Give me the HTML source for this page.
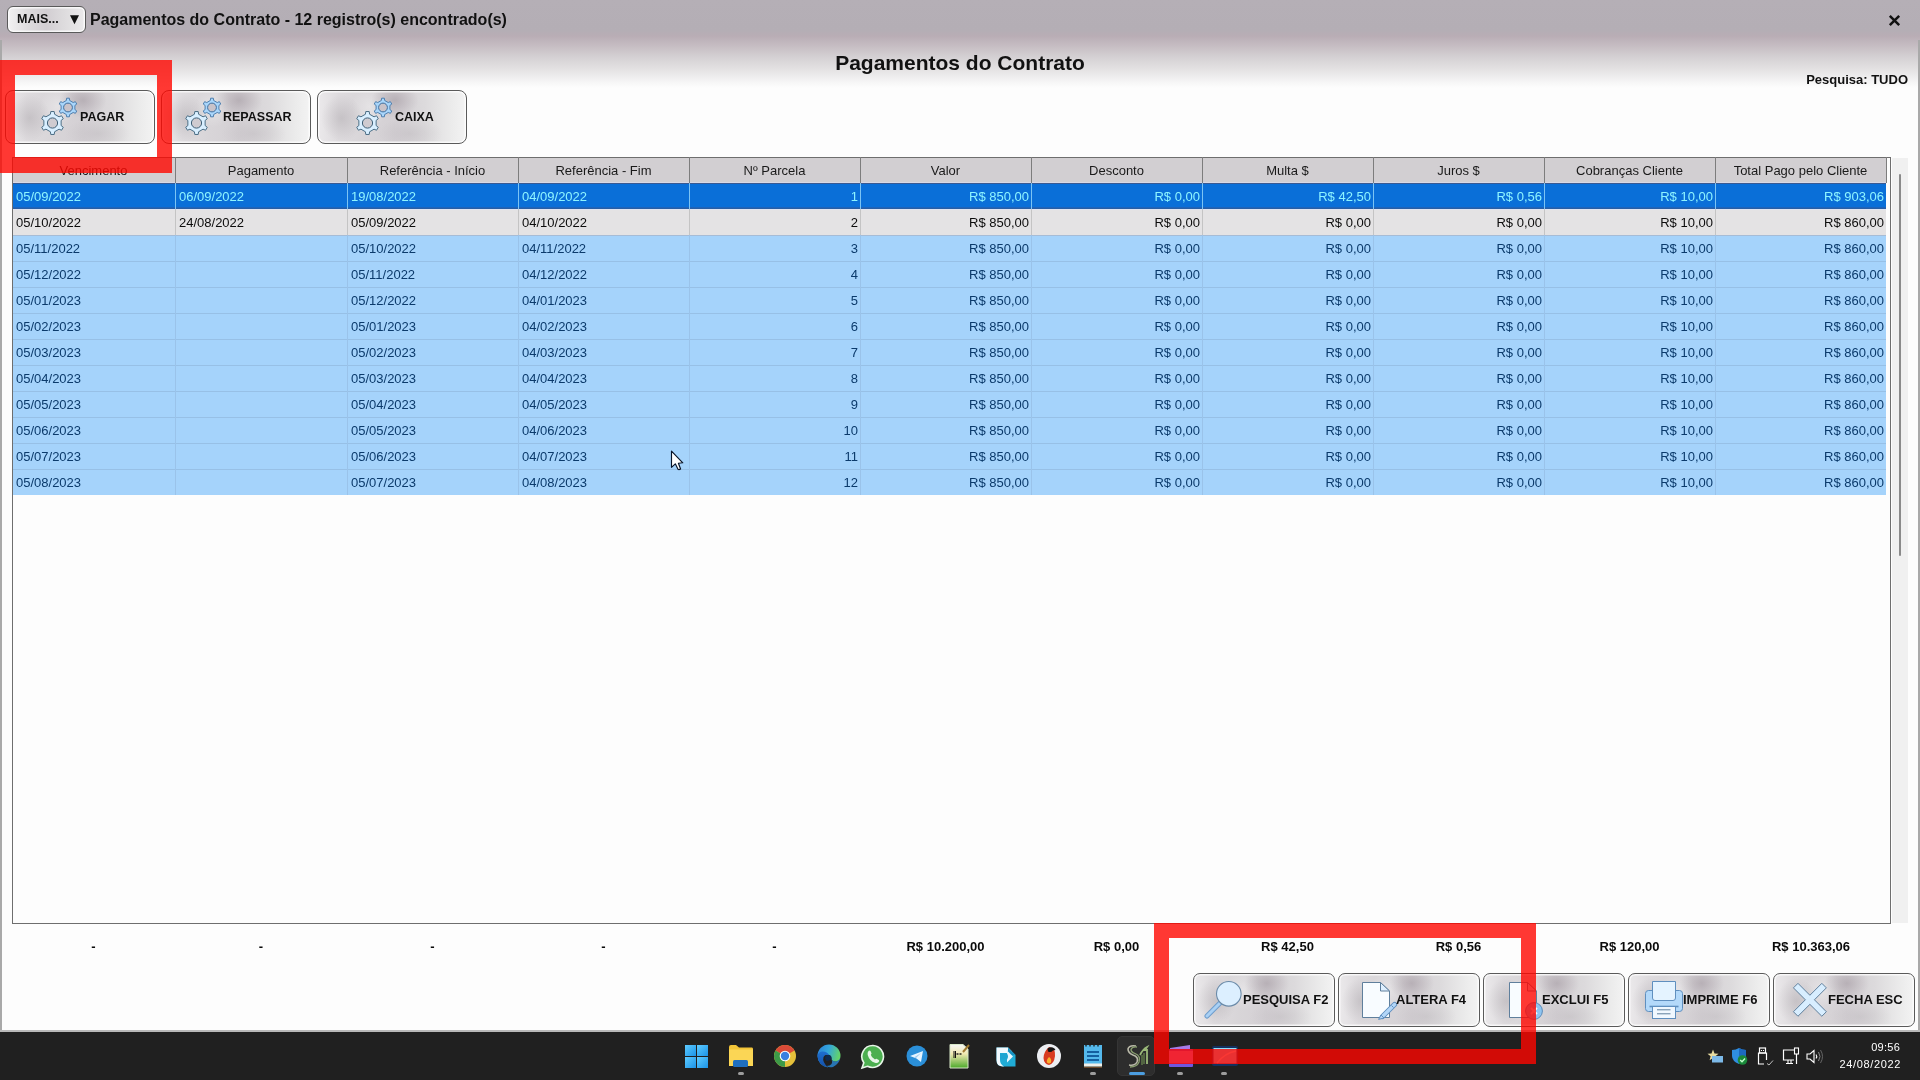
<!DOCTYPE html>
<html><head><meta charset="utf-8"><title>Pagamentos do Contrato</title>
<style>
*{margin:0;padding:0;box-sizing:border-box}
html,body{width:1920px;height:1080px;overflow:hidden}
body{position:relative;background:#fdfdfd;font-family:"Liberation Sans",sans-serif;color:#000}
.ab{position:absolute}
.btn{position:absolute;border:1px solid #5a5a5a;border-radius:8px;background:radial-gradient(ellipse 14% 45% at 16% 52%, rgba(170,165,170,.45), rgba(170,165,170,0)),radial-gradient(ellipse 16% 34% at 52% 18%, rgba(160,150,158,.55), rgba(160,150,158,0)),radial-gradient(ellipse 22% 30% at 62% 82%, rgba(180,175,180,.35), rgba(180,175,180,0)),radial-gradient(ellipse 12% 40% at 35% 30%, rgba(255,255,255,.35), rgba(255,255,255,0)),linear-gradient(90deg,#ebe9eb 0%,#dedbde 14%,#d8d5d8 32%,#d4d0d4 52%,#dcdadc 72%,#ebebeb 90%,#f3f3f3 100%);box-shadow:inset 0 0 0 1.5px rgba(255,255,255,.75);}
.bt{position:absolute;font-weight:bold;font-size:13px;white-space:nowrap;line-height:15px;color:#111}
.c{position:absolute;font-size:13px;line-height:15px;white-space:nowrap}
.hd{position:absolute;font-size:13px;line-height:15px;white-space:nowrap;text-align:center;color:#1a1a1a}
.red{position:absolute;background:rgba(255,6,0,.8)}
</style></head><body>
<div class="ab" style="left:0;top:0;width:1920px;height:1080px;will-change:transform">

<div class="ab" style="left:0;top:0;width:1920px;height:92px;background:linear-gradient(180deg,#b5afb6 0px,#b4aeb5 30px,#b9adb5 36px,#c6bdc3 46px,#d3cfd2 56px,#e2e0e1 68px,#eeedee 77px,#f7f7f7 83px,#fdfdfd 88px)"></div>
<div class="ab" style="left:0;top:40px;width:2px;height:991px;background:#a9a9a9"></div>
<div class="ab" style="left:1918px;top:40px;width:2px;height:991px;background:#a9a9a9"></div>
<div class="ab" style="left:0;top:1030px;width:1920px;height:2px;background:#b9b9b9"></div>
<div class="btn" style="left:7px;top:6px;width:79px;height:27px;border-radius:6px;background:linear-gradient(90deg,#f2f1f2 0%,#dedcde 25%,#d2ced2 50%,#dcdadc 70%,#ebeaeb 100%)"></div>
<div class="bt" style="left:17px;top:12px;font-size:12.5px">MAIS...</div>
<svg class="ab" style="left:69px;top:15px" width="11" height="11" viewBox="0 0 11 11"><path d="M1,0.3 L10,0.3 L5.5,9.2Z" fill="#111"/></svg>
<div class="bt" style="left:90px;top:11px;font-size:16px;line-height:18px">Pagamentos do Contrato - 12 registro(s) encontrado(s)</div>
<svg class="ab" style="left:1886px;top:12px" width="18" height="18" viewBox="0 0 18 18"><path d="M3.8,3.8 L13.2,13.2 M13.2,3.8 L3.8,13.2" stroke="#111" stroke-width="2.5"/></svg>
<div class="bt" style="left:0;width:1920px;text-align:center;top:51px;font-size:21px;line-height:24px">Pagamentos do Contrato</div>
<div class="bt" style="left:0;width:1908px;text-align:right;top:72px">Pesquisa: TUDO</div>
<div class="btn" style="left:5px;top:90px;width:150px;height:54px"></div>
<svg class="ab" style="left:40px;top:96px" width="42" height="42" viewBox="0 0 42 42"><path d="M26.32,4.50 L26.61,2.20 L29.39,2.20 L29.68,4.50 L33.22,6.54 L35.36,5.65 L36.75,8.05 L34.90,9.46 L34.90,13.54 L36.75,14.95 L35.36,17.35 L33.22,16.46 L29.68,18.50 L29.39,20.80 L26.61,20.80 L26.32,18.50 L22.78,16.46 L20.64,17.35 L19.25,14.95 L21.10,13.54 L21.10,9.46 L19.25,8.05 L20.64,5.65 L22.78,6.54Z" fill="#a9d6fb" stroke="#4f7fae" stroke-width="1" stroke-linejoin="round"/><circle cx="28" cy="11.5" r="4.4" fill="#c9c3c9" stroke="#3f6f9f" stroke-width="1"/><path d="M10.40,18.25 L10.79,15.53 L14.21,15.53 L14.60,18.25 L19.03,20.80 L21.58,19.78 L23.29,22.75 L21.13,24.44 L21.13,29.56 L23.29,31.25 L21.58,34.22 L19.03,33.20 L14.60,35.75 L14.21,38.47 L10.79,38.47 L10.40,35.75 L5.97,33.20 L3.42,34.22 L1.71,31.25 L3.87,29.56 L3.87,24.44 L1.71,22.75 L3.42,19.78 L5.97,20.80Z" fill="#d9efff" stroke="#4d6f86" stroke-width="1" stroke-linejoin="round"/><circle cx="12.5" cy="27" r="5.1" fill="#cfcbd0" stroke="#3f5f76" stroke-width="1"/></svg>
<div class="bt" style="left:80px;top:110px;font-size:12.5px">PAGAR</div>
<div class="btn" style="left:161px;top:90px;width:150px;height:54px"></div>
<svg class="ab" style="left:184px;top:96px" width="42" height="42" viewBox="0 0 42 42"><path d="M26.32,4.50 L26.61,2.20 L29.39,2.20 L29.68,4.50 L33.22,6.54 L35.36,5.65 L36.75,8.05 L34.90,9.46 L34.90,13.54 L36.75,14.95 L35.36,17.35 L33.22,16.46 L29.68,18.50 L29.39,20.80 L26.61,20.80 L26.32,18.50 L22.78,16.46 L20.64,17.35 L19.25,14.95 L21.10,13.54 L21.10,9.46 L19.25,8.05 L20.64,5.65 L22.78,6.54Z" fill="#a9d6fb" stroke="#4f7fae" stroke-width="1" stroke-linejoin="round"/><circle cx="28" cy="11.5" r="4.4" fill="#c9c3c9" stroke="#3f6f9f" stroke-width="1"/><path d="M10.40,18.25 L10.79,15.53 L14.21,15.53 L14.60,18.25 L19.03,20.80 L21.58,19.78 L23.29,22.75 L21.13,24.44 L21.13,29.56 L23.29,31.25 L21.58,34.22 L19.03,33.20 L14.60,35.75 L14.21,38.47 L10.79,38.47 L10.40,35.75 L5.97,33.20 L3.42,34.22 L1.71,31.25 L3.87,29.56 L3.87,24.44 L1.71,22.75 L3.42,19.78 L5.97,20.80Z" fill="#d9efff" stroke="#4d6f86" stroke-width="1" stroke-linejoin="round"/><circle cx="12.5" cy="27" r="5.1" fill="#cfcbd0" stroke="#3f5f76" stroke-width="1"/></svg>
<div class="bt" style="left:223px;top:110px;font-size:12.5px">REPASSAR</div>
<div class="btn" style="left:317px;top:90px;width:150px;height:54px"></div>
<svg class="ab" style="left:355px;top:96px" width="42" height="42" viewBox="0 0 42 42"><path d="M26.32,4.50 L26.61,2.20 L29.39,2.20 L29.68,4.50 L33.22,6.54 L35.36,5.65 L36.75,8.05 L34.90,9.46 L34.90,13.54 L36.75,14.95 L35.36,17.35 L33.22,16.46 L29.68,18.50 L29.39,20.80 L26.61,20.80 L26.32,18.50 L22.78,16.46 L20.64,17.35 L19.25,14.95 L21.10,13.54 L21.10,9.46 L19.25,8.05 L20.64,5.65 L22.78,6.54Z" fill="#a9d6fb" stroke="#4f7fae" stroke-width="1" stroke-linejoin="round"/><circle cx="28" cy="11.5" r="4.4" fill="#c9c3c9" stroke="#3f6f9f" stroke-width="1"/><path d="M10.40,18.25 L10.79,15.53 L14.21,15.53 L14.60,18.25 L19.03,20.80 L21.58,19.78 L23.29,22.75 L21.13,24.44 L21.13,29.56 L23.29,31.25 L21.58,34.22 L19.03,33.20 L14.60,35.75 L14.21,38.47 L10.79,38.47 L10.40,35.75 L5.97,33.20 L3.42,34.22 L1.71,31.25 L3.87,29.56 L3.87,24.44 L1.71,22.75 L3.42,19.78 L5.97,20.80Z" fill="#d9efff" stroke="#4d6f86" stroke-width="1" stroke-linejoin="round"/><circle cx="12.5" cy="27" r="5.1" fill="#cfcbd0" stroke="#3f5f76" stroke-width="1"/></svg>
<div class="bt" style="left:395px;top:110px;font-size:12.5px">CAIXA</div>
<div class="ab" style="left:12px;top:157px;width:1879px;height:767px;border:1px solid #6e6e6e;background:#fdfdfd"></div>
<div class="ab" style="left:1892px;top:158px;width:16px;height:765px;background:#f0f0f0"></div>
<div class="ab" style="left:1899px;top:174px;width:2px;height:382px;background:#8a8a8a;border-radius:1px"></div>
<div class="ab" style="left:13px;top:158px;width:1873px;height:25px;background:#d2cfd2"></div>
<div class="hd" style="left:12px;width:163px;top:163px">Vencimento</div>
<div class="hd" style="left:175px;width:172px;top:163px">Pagamento</div>
<div class="hd" style="left:347px;width:171px;top:163px">Referência - Início</div>
<div class="hd" style="left:518px;width:171px;top:163px">Referência - Fim</div>
<div class="hd" style="left:689px;width:171px;top:163px">Nº Parcela</div>
<div class="hd" style="left:860px;width:171px;top:163px">Valor</div>
<div class="hd" style="left:1031px;width:171px;top:163px">Desconto</div>
<div class="hd" style="left:1202px;width:171px;top:163px">Multa $</div>
<div class="hd" style="left:1373px;width:171px;top:163px">Juros $</div>
<div class="hd" style="left:1544px;width:171px;top:163px">Cobranças Cliente</div>
<div class="hd" style="left:1715px;width:171px;top:163px">Total Pago pelo Cliente</div>
<div class="ab" style="left:13px;top:182px;width:1873px;height:1px;background:#d9d9e6"></div>
<div class="ab" style="left:175px;top:157px;width:1px;height:26px;background:#7d7d7d"></div>
<div class="ab" style="left:347px;top:157px;width:1px;height:26px;background:#7d7d7d"></div>
<div class="ab" style="left:518px;top:157px;width:1px;height:26px;background:#7d7d7d"></div>
<div class="ab" style="left:689px;top:157px;width:1px;height:26px;background:#7d7d7d"></div>
<div class="ab" style="left:860px;top:157px;width:1px;height:26px;background:#7d7d7d"></div>
<div class="ab" style="left:1031px;top:157px;width:1px;height:26px;background:#7d7d7d"></div>
<div class="ab" style="left:1202px;top:157px;width:1px;height:26px;background:#7d7d7d"></div>
<div class="ab" style="left:1373px;top:157px;width:1px;height:26px;background:#7d7d7d"></div>
<div class="ab" style="left:1544px;top:157px;width:1px;height:26px;background:#7d7d7d"></div>
<div class="ab" style="left:1715px;top:157px;width:1px;height:26px;background:#7d7d7d"></div>
<div class="ab" style="left:1886px;top:157px;width:1px;height:26px;background:#7d7d7d"></div>
<div class="ab" style="left:13px;top:183px;width:1873px;height:26px;background:#0a6fd8;border-top:1px solid #3a5a92"></div>
<div class="ab" style="left:13px;top:207px;width:1873px;height:2px;background:linear-gradient(180deg,#1a66c4,#2c5c9c)"></div>
<div class="ab" style="left:175px;top:183px;width:1px;height:26px;background:#7cc4f4"></div>
<div class="ab" style="left:347px;top:183px;width:1px;height:26px;background:#7cc4f4"></div>
<div class="ab" style="left:518px;top:183px;width:1px;height:26px;background:#7cc4f4"></div>
<div class="ab" style="left:689px;top:183px;width:1px;height:26px;background:#7cc4f4"></div>
<div class="ab" style="left:860px;top:183px;width:1px;height:26px;background:#7cc4f4"></div>
<div class="ab" style="left:1031px;top:183px;width:1px;height:26px;background:#7cc4f4"></div>
<div class="ab" style="left:1202px;top:183px;width:1px;height:26px;background:#7cc4f4"></div>
<div class="ab" style="left:1373px;top:183px;width:1px;height:26px;background:#7cc4f4"></div>
<div class="ab" style="left:1544px;top:183px;width:1px;height:26px;background:#7cc4f4"></div>
<div class="ab" style="left:1715px;top:183px;width:1px;height:26px;background:#7cc4f4"></div>
<div class="c" style="left:16px;top:189px;color:#8ef4ff">05/09/2022</div>
<div class="c" style="left:179px;top:189px;color:#8ef4ff">06/09/2022</div>
<div class="c" style="left:351px;top:189px;color:#8ef4ff">19/08/2022</div>
<div class="c" style="left:522px;top:189px;color:#8ef4ff">04/09/2022</div>
<div class="c" style="left:689px;width:169px;text-align:right;top:189px;color:#8ef4ff">1</div>
<div class="c" style="left:860px;width:169px;text-align:right;top:189px;color:#8ef4ff">R$ 850,00</div>
<div class="c" style="left:1031px;width:169px;text-align:right;top:189px;color:#8ef4ff">R$ 0,00</div>
<div class="c" style="left:1202px;width:169px;text-align:right;top:189px;color:#8ef4ff">R$ 42,50</div>
<div class="c" style="left:1373px;width:169px;text-align:right;top:189px;color:#8ef4ff">R$ 0,56</div>
<div class="c" style="left:1544px;width:169px;text-align:right;top:189px;color:#8ef4ff">R$ 10,00</div>
<div class="c" style="left:1715px;width:169px;text-align:right;top:189px;color:#8ef4ff">R$ 903,06</div>
<div class="ab" style="left:13px;top:209px;width:1873px;height:26px;background:#e4e3e4;border-top:1px solid #dfe4f2"></div>
<div class="ab" style="left:175px;top:209px;width:1px;height:26px;background:#c4c4c4"></div>
<div class="ab" style="left:347px;top:209px;width:1px;height:26px;background:#c4c4c4"></div>
<div class="ab" style="left:518px;top:209px;width:1px;height:26px;background:#c4c4c4"></div>
<div class="ab" style="left:689px;top:209px;width:1px;height:26px;background:#c4c4c4"></div>
<div class="ab" style="left:860px;top:209px;width:1px;height:26px;background:#c4c4c4"></div>
<div class="ab" style="left:1031px;top:209px;width:1px;height:26px;background:#c4c4c4"></div>
<div class="ab" style="left:1202px;top:209px;width:1px;height:26px;background:#c4c4c4"></div>
<div class="ab" style="left:1373px;top:209px;width:1px;height:26px;background:#c4c4c4"></div>
<div class="ab" style="left:1544px;top:209px;width:1px;height:26px;background:#c4c4c4"></div>
<div class="ab" style="left:1715px;top:209px;width:1px;height:26px;background:#c4c4c4"></div>
<div class="c" style="left:16px;top:215px;color:#0c0c0c">05/10/2022</div>
<div class="c" style="left:179px;top:215px;color:#0c0c0c">24/08/2022</div>
<div class="c" style="left:351px;top:215px;color:#0c0c0c">05/09/2022</div>
<div class="c" style="left:522px;top:215px;color:#0c0c0c">04/10/2022</div>
<div class="c" style="left:689px;width:169px;text-align:right;top:215px;color:#0c0c0c">2</div>
<div class="c" style="left:860px;width:169px;text-align:right;top:215px;color:#0c0c0c">R$ 850,00</div>
<div class="c" style="left:1031px;width:169px;text-align:right;top:215px;color:#0c0c0c">R$ 0,00</div>
<div class="c" style="left:1202px;width:169px;text-align:right;top:215px;color:#0c0c0c">R$ 0,00</div>
<div class="c" style="left:1373px;width:169px;text-align:right;top:215px;color:#0c0c0c">R$ 0,00</div>
<div class="c" style="left:1544px;width:169px;text-align:right;top:215px;color:#0c0c0c">R$ 10,00</div>
<div class="c" style="left:1715px;width:169px;text-align:right;top:215px;color:#0c0c0c">R$ 860,00</div>
<div class="ab" style="left:13px;top:235px;width:1873px;height:26px;background:#a5d3fb;border-top:1px solid #a6bcd6"></div>
<div class="ab" style="left:175px;top:235px;width:1px;height:26px;background:#9ac3ea"></div>
<div class="ab" style="left:347px;top:235px;width:1px;height:26px;background:#9ac3ea"></div>
<div class="ab" style="left:518px;top:235px;width:1px;height:26px;background:#9ac3ea"></div>
<div class="ab" style="left:689px;top:235px;width:1px;height:26px;background:#9ac3ea"></div>
<div class="ab" style="left:860px;top:235px;width:1px;height:26px;background:#9ac3ea"></div>
<div class="ab" style="left:1031px;top:235px;width:1px;height:26px;background:#9ac3ea"></div>
<div class="ab" style="left:1202px;top:235px;width:1px;height:26px;background:#9ac3ea"></div>
<div class="ab" style="left:1373px;top:235px;width:1px;height:26px;background:#9ac3ea"></div>
<div class="ab" style="left:1544px;top:235px;width:1px;height:26px;background:#9ac3ea"></div>
<div class="ab" style="left:1715px;top:235px;width:1px;height:26px;background:#9ac3ea"></div>
<div class="c" style="left:16px;top:241px;color:#0b3a6b">05/11/2022</div>
<div class="c" style="left:351px;top:241px;color:#0b3a6b">05/10/2022</div>
<div class="c" style="left:522px;top:241px;color:#0b3a6b">04/11/2022</div>
<div class="c" style="left:689px;width:169px;text-align:right;top:241px;color:#0b3a6b">3</div>
<div class="c" style="left:860px;width:169px;text-align:right;top:241px;color:#0b3a6b">R$ 850,00</div>
<div class="c" style="left:1031px;width:169px;text-align:right;top:241px;color:#0b3a6b">R$ 0,00</div>
<div class="c" style="left:1202px;width:169px;text-align:right;top:241px;color:#0b3a6b">R$ 0,00</div>
<div class="c" style="left:1373px;width:169px;text-align:right;top:241px;color:#0b3a6b">R$ 0,00</div>
<div class="c" style="left:1544px;width:169px;text-align:right;top:241px;color:#0b3a6b">R$ 10,00</div>
<div class="c" style="left:1715px;width:169px;text-align:right;top:241px;color:#0b3a6b">R$ 860,00</div>
<div class="ab" style="left:13px;top:261px;width:1873px;height:26px;background:#a5d3fb;border-top:1px solid #97c0e6"></div>
<div class="ab" style="left:175px;top:261px;width:1px;height:26px;background:#9ac3ea"></div>
<div class="ab" style="left:347px;top:261px;width:1px;height:26px;background:#9ac3ea"></div>
<div class="ab" style="left:518px;top:261px;width:1px;height:26px;background:#9ac3ea"></div>
<div class="ab" style="left:689px;top:261px;width:1px;height:26px;background:#9ac3ea"></div>
<div class="ab" style="left:860px;top:261px;width:1px;height:26px;background:#9ac3ea"></div>
<div class="ab" style="left:1031px;top:261px;width:1px;height:26px;background:#9ac3ea"></div>
<div class="ab" style="left:1202px;top:261px;width:1px;height:26px;background:#9ac3ea"></div>
<div class="ab" style="left:1373px;top:261px;width:1px;height:26px;background:#9ac3ea"></div>
<div class="ab" style="left:1544px;top:261px;width:1px;height:26px;background:#9ac3ea"></div>
<div class="ab" style="left:1715px;top:261px;width:1px;height:26px;background:#9ac3ea"></div>
<div class="c" style="left:16px;top:267px;color:#0b3a6b">05/12/2022</div>
<div class="c" style="left:351px;top:267px;color:#0b3a6b">05/11/2022</div>
<div class="c" style="left:522px;top:267px;color:#0b3a6b">04/12/2022</div>
<div class="c" style="left:689px;width:169px;text-align:right;top:267px;color:#0b3a6b">4</div>
<div class="c" style="left:860px;width:169px;text-align:right;top:267px;color:#0b3a6b">R$ 850,00</div>
<div class="c" style="left:1031px;width:169px;text-align:right;top:267px;color:#0b3a6b">R$ 0,00</div>
<div class="c" style="left:1202px;width:169px;text-align:right;top:267px;color:#0b3a6b">R$ 0,00</div>
<div class="c" style="left:1373px;width:169px;text-align:right;top:267px;color:#0b3a6b">R$ 0,00</div>
<div class="c" style="left:1544px;width:169px;text-align:right;top:267px;color:#0b3a6b">R$ 10,00</div>
<div class="c" style="left:1715px;width:169px;text-align:right;top:267px;color:#0b3a6b">R$ 860,00</div>
<div class="ab" style="left:13px;top:287px;width:1873px;height:26px;background:#a5d3fb;border-top:1px solid #97c0e6"></div>
<div class="ab" style="left:175px;top:287px;width:1px;height:26px;background:#9ac3ea"></div>
<div class="ab" style="left:347px;top:287px;width:1px;height:26px;background:#9ac3ea"></div>
<div class="ab" style="left:518px;top:287px;width:1px;height:26px;background:#9ac3ea"></div>
<div class="ab" style="left:689px;top:287px;width:1px;height:26px;background:#9ac3ea"></div>
<div class="ab" style="left:860px;top:287px;width:1px;height:26px;background:#9ac3ea"></div>
<div class="ab" style="left:1031px;top:287px;width:1px;height:26px;background:#9ac3ea"></div>
<div class="ab" style="left:1202px;top:287px;width:1px;height:26px;background:#9ac3ea"></div>
<div class="ab" style="left:1373px;top:287px;width:1px;height:26px;background:#9ac3ea"></div>
<div class="ab" style="left:1544px;top:287px;width:1px;height:26px;background:#9ac3ea"></div>
<div class="ab" style="left:1715px;top:287px;width:1px;height:26px;background:#9ac3ea"></div>
<div class="c" style="left:16px;top:293px;color:#0b3a6b">05/01/2023</div>
<div class="c" style="left:351px;top:293px;color:#0b3a6b">05/12/2022</div>
<div class="c" style="left:522px;top:293px;color:#0b3a6b">04/01/2023</div>
<div class="c" style="left:689px;width:169px;text-align:right;top:293px;color:#0b3a6b">5</div>
<div class="c" style="left:860px;width:169px;text-align:right;top:293px;color:#0b3a6b">R$ 850,00</div>
<div class="c" style="left:1031px;width:169px;text-align:right;top:293px;color:#0b3a6b">R$ 0,00</div>
<div class="c" style="left:1202px;width:169px;text-align:right;top:293px;color:#0b3a6b">R$ 0,00</div>
<div class="c" style="left:1373px;width:169px;text-align:right;top:293px;color:#0b3a6b">R$ 0,00</div>
<div class="c" style="left:1544px;width:169px;text-align:right;top:293px;color:#0b3a6b">R$ 10,00</div>
<div class="c" style="left:1715px;width:169px;text-align:right;top:293px;color:#0b3a6b">R$ 860,00</div>
<div class="ab" style="left:13px;top:313px;width:1873px;height:26px;background:#a5d3fb;border-top:1px solid #97c0e6"></div>
<div class="ab" style="left:175px;top:313px;width:1px;height:26px;background:#9ac3ea"></div>
<div class="ab" style="left:347px;top:313px;width:1px;height:26px;background:#9ac3ea"></div>
<div class="ab" style="left:518px;top:313px;width:1px;height:26px;background:#9ac3ea"></div>
<div class="ab" style="left:689px;top:313px;width:1px;height:26px;background:#9ac3ea"></div>
<div class="ab" style="left:860px;top:313px;width:1px;height:26px;background:#9ac3ea"></div>
<div class="ab" style="left:1031px;top:313px;width:1px;height:26px;background:#9ac3ea"></div>
<div class="ab" style="left:1202px;top:313px;width:1px;height:26px;background:#9ac3ea"></div>
<div class="ab" style="left:1373px;top:313px;width:1px;height:26px;background:#9ac3ea"></div>
<div class="ab" style="left:1544px;top:313px;width:1px;height:26px;background:#9ac3ea"></div>
<div class="ab" style="left:1715px;top:313px;width:1px;height:26px;background:#9ac3ea"></div>
<div class="c" style="left:16px;top:319px;color:#0b3a6b">05/02/2023</div>
<div class="c" style="left:351px;top:319px;color:#0b3a6b">05/01/2023</div>
<div class="c" style="left:522px;top:319px;color:#0b3a6b">04/02/2023</div>
<div class="c" style="left:689px;width:169px;text-align:right;top:319px;color:#0b3a6b">6</div>
<div class="c" style="left:860px;width:169px;text-align:right;top:319px;color:#0b3a6b">R$ 850,00</div>
<div class="c" style="left:1031px;width:169px;text-align:right;top:319px;color:#0b3a6b">R$ 0,00</div>
<div class="c" style="left:1202px;width:169px;text-align:right;top:319px;color:#0b3a6b">R$ 0,00</div>
<div class="c" style="left:1373px;width:169px;text-align:right;top:319px;color:#0b3a6b">R$ 0,00</div>
<div class="c" style="left:1544px;width:169px;text-align:right;top:319px;color:#0b3a6b">R$ 10,00</div>
<div class="c" style="left:1715px;width:169px;text-align:right;top:319px;color:#0b3a6b">R$ 860,00</div>
<div class="ab" style="left:13px;top:339px;width:1873px;height:26px;background:#a5d3fb;border-top:1px solid #97c0e6"></div>
<div class="ab" style="left:175px;top:339px;width:1px;height:26px;background:#9ac3ea"></div>
<div class="ab" style="left:347px;top:339px;width:1px;height:26px;background:#9ac3ea"></div>
<div class="ab" style="left:518px;top:339px;width:1px;height:26px;background:#9ac3ea"></div>
<div class="ab" style="left:689px;top:339px;width:1px;height:26px;background:#9ac3ea"></div>
<div class="ab" style="left:860px;top:339px;width:1px;height:26px;background:#9ac3ea"></div>
<div class="ab" style="left:1031px;top:339px;width:1px;height:26px;background:#9ac3ea"></div>
<div class="ab" style="left:1202px;top:339px;width:1px;height:26px;background:#9ac3ea"></div>
<div class="ab" style="left:1373px;top:339px;width:1px;height:26px;background:#9ac3ea"></div>
<div class="ab" style="left:1544px;top:339px;width:1px;height:26px;background:#9ac3ea"></div>
<div class="ab" style="left:1715px;top:339px;width:1px;height:26px;background:#9ac3ea"></div>
<div class="c" style="left:16px;top:345px;color:#0b3a6b">05/03/2023</div>
<div class="c" style="left:351px;top:345px;color:#0b3a6b">05/02/2023</div>
<div class="c" style="left:522px;top:345px;color:#0b3a6b">04/03/2023</div>
<div class="c" style="left:689px;width:169px;text-align:right;top:345px;color:#0b3a6b">7</div>
<div class="c" style="left:860px;width:169px;text-align:right;top:345px;color:#0b3a6b">R$ 850,00</div>
<div class="c" style="left:1031px;width:169px;text-align:right;top:345px;color:#0b3a6b">R$ 0,00</div>
<div class="c" style="left:1202px;width:169px;text-align:right;top:345px;color:#0b3a6b">R$ 0,00</div>
<div class="c" style="left:1373px;width:169px;text-align:right;top:345px;color:#0b3a6b">R$ 0,00</div>
<div class="c" style="left:1544px;width:169px;text-align:right;top:345px;color:#0b3a6b">R$ 10,00</div>
<div class="c" style="left:1715px;width:169px;text-align:right;top:345px;color:#0b3a6b">R$ 860,00</div>
<div class="ab" style="left:13px;top:365px;width:1873px;height:26px;background:#a5d3fb;border-top:1px solid #97c0e6"></div>
<div class="ab" style="left:175px;top:365px;width:1px;height:26px;background:#9ac3ea"></div>
<div class="ab" style="left:347px;top:365px;width:1px;height:26px;background:#9ac3ea"></div>
<div class="ab" style="left:518px;top:365px;width:1px;height:26px;background:#9ac3ea"></div>
<div class="ab" style="left:689px;top:365px;width:1px;height:26px;background:#9ac3ea"></div>
<div class="ab" style="left:860px;top:365px;width:1px;height:26px;background:#9ac3ea"></div>
<div class="ab" style="left:1031px;top:365px;width:1px;height:26px;background:#9ac3ea"></div>
<div class="ab" style="left:1202px;top:365px;width:1px;height:26px;background:#9ac3ea"></div>
<div class="ab" style="left:1373px;top:365px;width:1px;height:26px;background:#9ac3ea"></div>
<div class="ab" style="left:1544px;top:365px;width:1px;height:26px;background:#9ac3ea"></div>
<div class="ab" style="left:1715px;top:365px;width:1px;height:26px;background:#9ac3ea"></div>
<div class="c" style="left:16px;top:371px;color:#0b3a6b">05/04/2023</div>
<div class="c" style="left:351px;top:371px;color:#0b3a6b">05/03/2023</div>
<div class="c" style="left:522px;top:371px;color:#0b3a6b">04/04/2023</div>
<div class="c" style="left:689px;width:169px;text-align:right;top:371px;color:#0b3a6b">8</div>
<div class="c" style="left:860px;width:169px;text-align:right;top:371px;color:#0b3a6b">R$ 850,00</div>
<div class="c" style="left:1031px;width:169px;text-align:right;top:371px;color:#0b3a6b">R$ 0,00</div>
<div class="c" style="left:1202px;width:169px;text-align:right;top:371px;color:#0b3a6b">R$ 0,00</div>
<div class="c" style="left:1373px;width:169px;text-align:right;top:371px;color:#0b3a6b">R$ 0,00</div>
<div class="c" style="left:1544px;width:169px;text-align:right;top:371px;color:#0b3a6b">R$ 10,00</div>
<div class="c" style="left:1715px;width:169px;text-align:right;top:371px;color:#0b3a6b">R$ 860,00</div>
<div class="ab" style="left:13px;top:391px;width:1873px;height:26px;background:#a5d3fb;border-top:1px solid #97c0e6"></div>
<div class="ab" style="left:175px;top:391px;width:1px;height:26px;background:#9ac3ea"></div>
<div class="ab" style="left:347px;top:391px;width:1px;height:26px;background:#9ac3ea"></div>
<div class="ab" style="left:518px;top:391px;width:1px;height:26px;background:#9ac3ea"></div>
<div class="ab" style="left:689px;top:391px;width:1px;height:26px;background:#9ac3ea"></div>
<div class="ab" style="left:860px;top:391px;width:1px;height:26px;background:#9ac3ea"></div>
<div class="ab" style="left:1031px;top:391px;width:1px;height:26px;background:#9ac3ea"></div>
<div class="ab" style="left:1202px;top:391px;width:1px;height:26px;background:#9ac3ea"></div>
<div class="ab" style="left:1373px;top:391px;width:1px;height:26px;background:#9ac3ea"></div>
<div class="ab" style="left:1544px;top:391px;width:1px;height:26px;background:#9ac3ea"></div>
<div class="ab" style="left:1715px;top:391px;width:1px;height:26px;background:#9ac3ea"></div>
<div class="c" style="left:16px;top:397px;color:#0b3a6b">05/05/2023</div>
<div class="c" style="left:351px;top:397px;color:#0b3a6b">05/04/2023</div>
<div class="c" style="left:522px;top:397px;color:#0b3a6b">04/05/2023</div>
<div class="c" style="left:689px;width:169px;text-align:right;top:397px;color:#0b3a6b">9</div>
<div class="c" style="left:860px;width:169px;text-align:right;top:397px;color:#0b3a6b">R$ 850,00</div>
<div class="c" style="left:1031px;width:169px;text-align:right;top:397px;color:#0b3a6b">R$ 0,00</div>
<div class="c" style="left:1202px;width:169px;text-align:right;top:397px;color:#0b3a6b">R$ 0,00</div>
<div class="c" style="left:1373px;width:169px;text-align:right;top:397px;color:#0b3a6b">R$ 0,00</div>
<div class="c" style="left:1544px;width:169px;text-align:right;top:397px;color:#0b3a6b">R$ 10,00</div>
<div class="c" style="left:1715px;width:169px;text-align:right;top:397px;color:#0b3a6b">R$ 860,00</div>
<div class="ab" style="left:13px;top:417px;width:1873px;height:26px;background:#a5d3fb;border-top:1px solid #97c0e6"></div>
<div class="ab" style="left:175px;top:417px;width:1px;height:26px;background:#9ac3ea"></div>
<div class="ab" style="left:347px;top:417px;width:1px;height:26px;background:#9ac3ea"></div>
<div class="ab" style="left:518px;top:417px;width:1px;height:26px;background:#9ac3ea"></div>
<div class="ab" style="left:689px;top:417px;width:1px;height:26px;background:#9ac3ea"></div>
<div class="ab" style="left:860px;top:417px;width:1px;height:26px;background:#9ac3ea"></div>
<div class="ab" style="left:1031px;top:417px;width:1px;height:26px;background:#9ac3ea"></div>
<div class="ab" style="left:1202px;top:417px;width:1px;height:26px;background:#9ac3ea"></div>
<div class="ab" style="left:1373px;top:417px;width:1px;height:26px;background:#9ac3ea"></div>
<div class="ab" style="left:1544px;top:417px;width:1px;height:26px;background:#9ac3ea"></div>
<div class="ab" style="left:1715px;top:417px;width:1px;height:26px;background:#9ac3ea"></div>
<div class="c" style="left:16px;top:423px;color:#0b3a6b">05/06/2023</div>
<div class="c" style="left:351px;top:423px;color:#0b3a6b">05/05/2023</div>
<div class="c" style="left:522px;top:423px;color:#0b3a6b">04/06/2023</div>
<div class="c" style="left:689px;width:169px;text-align:right;top:423px;color:#0b3a6b">10</div>
<div class="c" style="left:860px;width:169px;text-align:right;top:423px;color:#0b3a6b">R$ 850,00</div>
<div class="c" style="left:1031px;width:169px;text-align:right;top:423px;color:#0b3a6b">R$ 0,00</div>
<div class="c" style="left:1202px;width:169px;text-align:right;top:423px;color:#0b3a6b">R$ 0,00</div>
<div class="c" style="left:1373px;width:169px;text-align:right;top:423px;color:#0b3a6b">R$ 0,00</div>
<div class="c" style="left:1544px;width:169px;text-align:right;top:423px;color:#0b3a6b">R$ 10,00</div>
<div class="c" style="left:1715px;width:169px;text-align:right;top:423px;color:#0b3a6b">R$ 860,00</div>
<div class="ab" style="left:13px;top:443px;width:1873px;height:26px;background:#a5d3fb;border-top:1px solid #97c0e6"></div>
<div class="ab" style="left:175px;top:443px;width:1px;height:26px;background:#9ac3ea"></div>
<div class="ab" style="left:347px;top:443px;width:1px;height:26px;background:#9ac3ea"></div>
<div class="ab" style="left:518px;top:443px;width:1px;height:26px;background:#9ac3ea"></div>
<div class="ab" style="left:689px;top:443px;width:1px;height:26px;background:#9ac3ea"></div>
<div class="ab" style="left:860px;top:443px;width:1px;height:26px;background:#9ac3ea"></div>
<div class="ab" style="left:1031px;top:443px;width:1px;height:26px;background:#9ac3ea"></div>
<div class="ab" style="left:1202px;top:443px;width:1px;height:26px;background:#9ac3ea"></div>
<div class="ab" style="left:1373px;top:443px;width:1px;height:26px;background:#9ac3ea"></div>
<div class="ab" style="left:1544px;top:443px;width:1px;height:26px;background:#9ac3ea"></div>
<div class="ab" style="left:1715px;top:443px;width:1px;height:26px;background:#9ac3ea"></div>
<div class="c" style="left:16px;top:449px;color:#0b3a6b">05/07/2023</div>
<div class="c" style="left:351px;top:449px;color:#0b3a6b">05/06/2023</div>
<div class="c" style="left:522px;top:449px;color:#0b3a6b">04/07/2023</div>
<div class="c" style="left:689px;width:169px;text-align:right;top:449px;color:#0b3a6b">11</div>
<div class="c" style="left:860px;width:169px;text-align:right;top:449px;color:#0b3a6b">R$ 850,00</div>
<div class="c" style="left:1031px;width:169px;text-align:right;top:449px;color:#0b3a6b">R$ 0,00</div>
<div class="c" style="left:1202px;width:169px;text-align:right;top:449px;color:#0b3a6b">R$ 0,00</div>
<div class="c" style="left:1373px;width:169px;text-align:right;top:449px;color:#0b3a6b">R$ 0,00</div>
<div class="c" style="left:1544px;width:169px;text-align:right;top:449px;color:#0b3a6b">R$ 10,00</div>
<div class="c" style="left:1715px;width:169px;text-align:right;top:449px;color:#0b3a6b">R$ 860,00</div>
<div class="ab" style="left:13px;top:469px;width:1873px;height:26px;background:#a5d3fb;border-top:1px solid #97c0e6"></div>
<div class="ab" style="left:175px;top:469px;width:1px;height:26px;background:#9ac3ea"></div>
<div class="ab" style="left:347px;top:469px;width:1px;height:26px;background:#9ac3ea"></div>
<div class="ab" style="left:518px;top:469px;width:1px;height:26px;background:#9ac3ea"></div>
<div class="ab" style="left:689px;top:469px;width:1px;height:26px;background:#9ac3ea"></div>
<div class="ab" style="left:860px;top:469px;width:1px;height:26px;background:#9ac3ea"></div>
<div class="ab" style="left:1031px;top:469px;width:1px;height:26px;background:#9ac3ea"></div>
<div class="ab" style="left:1202px;top:469px;width:1px;height:26px;background:#9ac3ea"></div>
<div class="ab" style="left:1373px;top:469px;width:1px;height:26px;background:#9ac3ea"></div>
<div class="ab" style="left:1544px;top:469px;width:1px;height:26px;background:#9ac3ea"></div>
<div class="ab" style="left:1715px;top:469px;width:1px;height:26px;background:#9ac3ea"></div>
<div class="c" style="left:16px;top:475px;color:#0b3a6b">05/08/2023</div>
<div class="c" style="left:351px;top:475px;color:#0b3a6b">05/07/2023</div>
<div class="c" style="left:522px;top:475px;color:#0b3a6b">04/08/2023</div>
<div class="c" style="left:689px;width:169px;text-align:right;top:475px;color:#0b3a6b">12</div>
<div class="c" style="left:860px;width:169px;text-align:right;top:475px;color:#0b3a6b">R$ 850,00</div>
<div class="c" style="left:1031px;width:169px;text-align:right;top:475px;color:#0b3a6b">R$ 0,00</div>
<div class="c" style="left:1202px;width:169px;text-align:right;top:475px;color:#0b3a6b">R$ 0,00</div>
<div class="c" style="left:1373px;width:169px;text-align:right;top:475px;color:#0b3a6b">R$ 0,00</div>
<div class="c" style="left:1544px;width:169px;text-align:right;top:475px;color:#0b3a6b">R$ 10,00</div>
<div class="c" style="left:1715px;width:169px;text-align:right;top:475px;color:#0b3a6b">R$ 860,00</div>
<div class="bt" style="left:12px;width:163px;text-align:center;top:939px;color:#0a0a0a">-</div>
<div class="bt" style="left:175px;width:172px;text-align:center;top:939px;color:#0a0a0a">-</div>
<div class="bt" style="left:347px;width:171px;text-align:center;top:939px;color:#0a0a0a">-</div>
<div class="bt" style="left:518px;width:171px;text-align:center;top:939px;color:#0a0a0a">-</div>
<div class="bt" style="left:689px;width:171px;text-align:center;top:939px;color:#0a0a0a">-</div>
<div class="bt" style="left:860px;width:171px;text-align:center;top:939px;color:#0a0a0a">R$ 10.200,00</div>
<div class="bt" style="left:1031px;width:171px;text-align:center;top:939px;color:#0a0a0a">R$ 0,00</div>
<div class="bt" style="left:1202px;width:171px;text-align:center;top:939px;color:#0a0a0a">R$ 42,50</div>
<div class="bt" style="left:1373px;width:171px;text-align:center;top:939px;color:#0a0a0a">R$ 0,56</div>
<div class="bt" style="left:1544px;width:171px;text-align:center;top:939px;color:#0a0a0a">R$ 120,00</div>
<div class="bt" style="left:1715px;width:192px;text-align:center;top:939px;color:#0a0a0a">R$ 10.363,06</div>
<div class="btn" style="left:1193px;top:973px;width:142px;height:54px;border-radius:7px"></div>
<div class="btn" style="left:1338px;top:973px;width:142px;height:54px;border-radius:7px"></div>
<div class="btn" style="left:1483px;top:973px;width:142px;height:54px;border-radius:7px"></div>
<div class="btn" style="left:1628px;top:973px;width:142px;height:54px;border-radius:7px"></div>
<div class="btn" style="left:1773px;top:973px;width:142px;height:54px;border-radius:7px"></div>
<svg class="ab" style="left:1190px;top:970px" width="60" height="60" viewBox="0 0 60 60"><path d="M29.5,33.5 L17,46" stroke="#6d9ccc" stroke-width="5" stroke-linecap="round"/><path d="M29.5,33.5 L17,46" stroke="#a9d0f4" stroke-width="3" stroke-linecap="round"/><circle cx="38.8" cy="23.8" r="12.3" fill="#dcefff" stroke="#6a8aa8" stroke-width="1.1"/></svg>
<svg class="ab" style="left:1361px;top:981px" width="32" height="40" viewBox="0 0 32 40"><path d="M1.5,1.5 L19.5,1.5 L28.5,10 L28.5,36.5 L1.5,36.5 Z" fill="#f8fcff" stroke="#5f7f9c" stroke-width="1"/><path d="M19.5,1.5 L19.5,10 L28.5,10 Z" fill="#dff0ff" stroke="#5f7f9c" stroke-width="1" stroke-linejoin="round"/></svg>
<svg class="ab" style="left:1370px;top:995px" width="32" height="32" viewBox="0 0 32 32"><path d="M24.5,9.5 L12.5,21.5" stroke="#5f8fbf" stroke-width="5.2" stroke-linecap="round"/><path d="M24.5,9.5 L12.5,21.5" stroke="#b3d6f8" stroke-width="3.2" stroke-linecap="round"/><path d="M11,20 L14,23 L8.6,24.4 Z" fill="#b3d6f8" stroke="#5f8fbf" stroke-width="1" stroke-linejoin="round"/><path d="M21.5,10.5 L23.5,12.5" stroke="#5f8fbf" stroke-width="1"/></svg>
<svg class="ab" style="left:1508px;top:981px" width="32" height="40" viewBox="0 0 32 40"><path d="M1.5,1.5 L19.5,1.5 L28.5,10 L28.5,36.5 L1.5,36.5 Z" fill="#f8fcff" stroke="#5f7f9c" stroke-width="1"/><path d="M19.5,1.5 L19.5,10 L28.5,10 Z" fill="#dff0ff" stroke="#5f7f9c" stroke-width="1" stroke-linejoin="round"/></svg>
<svg class="ab" style="left:1522px;top:999px" width="24" height="24" viewBox="0 0 24 24"><circle cx="12" cy="12" r="8.4" fill="#8ec4f0" stroke="#5a8ab8" stroke-width="1"/><path d="M9,9 L15,15 M15,9 L9,15" stroke="#f4faff" stroke-width="1.8"/></svg>
<svg class="ab" style="left:1644px;top:980px" width="42" height="42" viewBox="0 0 42 42"><rect x="1.5" y="10.5" width="37" height="21" rx="3" fill="#b3d9fa" stroke="#5f8fbf" stroke-width="1"/><path d="M8.5,1.5 L31.5,1.5 L31.5,18 Q31.5,20.5 29,20.5 L11,20.5 Q8.5,20.5 8.5,18 Z" fill="#e4f3ff" stroke="#5f8fbf" stroke-width="1"/><path d="M5.5,26.5 L34.5,26.5" stroke="#5f8fbf" stroke-width="1.6"/><rect x="8.5" y="26.5" width="23" height="12" fill="#f0f8ff" stroke="#5f8fbf" stroke-width="1"/><path d="M13,29.8 L26.5,29.8 M13,33.8 L26.5,33.8" stroke="#5f7f9c" stroke-width="1"/></svg>
<svg class="ab" style="left:1790px;top:980px" width="40" height="40" viewBox="0 0 40 40"><path d="M3.44,7.86 L7.96,3.34 L19.90,15.27 L31.84,3.34 L36.36,7.86 L24.43,19.80 L36.36,31.74 L31.84,36.26 L19.90,24.33 L7.96,36.26 L3.44,31.74 L15.37,19.80Z" fill="#d8eeff" stroke="#5f7f9c" stroke-width="1" stroke-linejoin="round"/></svg>
<div class="bt" style="left:1243px;top:992px">PESQUISA F2</div>
<div class="bt" style="left:1396px;top:992px">ALTERA F4</div>
<div class="bt" style="left:1542px;top:992px">EXCLUI F5</div>
<div class="bt" style="left:1683px;top:992px">IMPRIME F6</div>
<div class="bt" style="left:1828px;top:992px">FECHA ESC</div>
<div class="ab" style="left:0;top:1032px;width:1920px;height:48px;background:#202020"></div>
<svg class="ab" style="left:684px;top:1044px" width="26" height="26" viewBox="0 0 26 26">
<defs><linearGradient id="wg" x1="0" y1="0" x2="1" y2="1"><stop offset="0" stop-color="#5ecbff"/><stop offset="1" stop-color="#1b94e8"/></linearGradient></defs>
<rect x="1" y="1" width="11" height="11" fill="url(#wg)"/><rect x="13" y="1" width="11" height="11" fill="url(#wg)"/>
<rect x="1" y="13" width="11" height="11" fill="url(#wg)"/><rect x="13" y="13" width="11" height="11" fill="url(#wg)"/></svg>
<svg class="ab" style="left:728px;top:1044px" width="26" height="24" viewBox="0 0 26 24">
<path d="M1,3 Q1,1 3,1 L8,1 L11,3.5 L24,3.5 Q25,3.5 25,5 L25,22 L1,22 Z" fill="#f2c438"/>
<rect x="1" y="5.5" width="24" height="16.5" fill="#fbd655"/>
<rect x="5" y="16" width="15" height="7" rx="1.5" fill="#1f6fc0"/></svg>
<div class="ab" style="left:738px;top:1072px;width:6px;height:3px;border-radius:2px;background:#9d9d9d"></div>
<svg class="ab" style="left:773px;top:1044px" width="24" height="24" viewBox="0 0 24 24">
<circle cx="12" cy="12" r="11" fill="#e5c03a"/>
<path d="M12,12 L2.5,6.5 A11,11 0 0 1 21.5,6.5 Z" fill="#d94a38"/>
<path d="M12,12 L2.5,6.5 A11,11 0 0 0 12,23 Z" fill="#3d9a48"/>
<circle cx="12" cy="12" r="5.3" fill="#fff"/><circle cx="12" cy="12" r="4.2" fill="#3a7fe0"/></svg>
<svg class="ab" style="left:816px;top:1043px" width="26" height="26" viewBox="0 0 26 26">
<defs><linearGradient id="eg" x1="0" y1="0" x2="1" y2="0.3"><stop offset="0" stop-color="#2a7fd8"/><stop offset=".5" stop-color="#33a6dc"/><stop offset="1" stop-color="#63d36a"/></linearGradient>
<linearGradient id="eg2" x1="0" y1="0" x2="0" y2="1"><stop offset="0" stop-color="#1e6fd0"/><stop offset="1" stop-color="#1450a8"/></linearGradient></defs>
<path d="M1.5,13 A11.5,11.5 0 0 1 24.5,13 Q24.5,17.5 20,18.5 Q16,19 15.5,15.5 Q15,11 10,11.5 Q5,12.5 6,18 Q7,22 12,24.4 A11.5,11.5 0 0 1 1.5,13Z" fill="url(#eg)"/>
<path d="M1.5,13 Q2,9 6,8.5 Q11,8 13,12 Q9,11 7.5,14 Q6,19 12,24.4 A11.5,11.5 0 0 1 1.5,13Z" fill="url(#eg2)"/>
<path d="M9,15 Q9.5,11.5 13,12 Q16,12.5 15.5,16 Q13,18.5 10,17.5Z" fill="#0e2a50"/>
<path d="M15.5,15.5 Q16,19 20,18.5 Q23,18 24.3,15 Q23,21 17,24 Q13,25 10.5,23 Q18,23 15.5,15.5Z" fill="#2a8ad8" opacity=".8"/>
</svg>
<svg class="ab" style="left:860px;top:1044px" width="26" height="26" viewBox="0 0 26 26">
<path d="M13,1.5 A11,11 0 1 1 7.5,22.3 L2,24 L3.8,18.8 A11,11 0 0 1 13,1.5Z" fill="#4caf50" stroke="#e8f5e8" stroke-width="1.6"/>
<path d="M8.5,7 Q9.5,6 10.5,7 L11.5,9.3 Q11.6,10.2 10.8,10.8 Q11.5,13.8 15,15.5 Q15.8,14.7 16.5,14.8 L18.8,16 Q19.6,16.8 18.7,18 Q17.5,19.5 15,18.8 Q9.5,17 7.7,11 Q7.2,8.7 8.5,7Z" fill="#e8f5e8"/>
</svg>
<svg class="ab" style="left:905px;top:1045px" width="24" height="24" viewBox="0 0 24 24">
<circle cx="12" cy="11" r="10.5" fill="#2b8fd8"/>
<path d="M5,11 L18,6 L16,17 L11.5,13.5 Z" fill="#e6f4ff"/><path d="M9,12.5 L16,8 L11,13" fill="#9cc9ee"/></svg>
<svg class="ab" style="left:949px;top:1043px" width="22" height="27" viewBox="0 0 22 27">
<defs><linearGradient id="ng" x1="0" y1="0" x2="0" y2="1"><stop offset="0" stop-color="#f6f6f6"/><stop offset=".4" stop-color="#f0e8b0"/><stop offset="1" stop-color="#4caa2a"/></linearGradient></defs>
<path d="M1,1.5 L14,1.5 L19,6 L19,25 L1,25 Z" fill="url(#ng)" stroke="#d8e8c8" stroke-width="1"/>
<path d="M5,8 L5,15 M6.5,8 L6.5,15" stroke="#111" stroke-width="1"/><path d="M7.5,11 L13,11" stroke="#222" stroke-width="1.3" stroke-dasharray="2,1"/>
<path d="M14,9 L20,2" stroke="#a07a30" stroke-width="2"/></svg>
<svg class="ab" style="left:995px;top:1046px" width="22" height="22" viewBox="0 0 22 22">
<path d="M1.5,1.5 L13,1.5 L20.5,9 L20.5,20.5 L8,20.5 Q1.5,20.5 1.5,14 Z" fill="#20acd6"/>
<path d="M1.5,1.5 L13,1.5 L17,5.5 L17,7 L5,7 L5,14 Q5,18 9,20.5 L8,20.5 Q1.5,20.5 1.5,14 Z" fill="#f2faff"/>
<path d="M13,1.5 L20.5,9 L13,9Z" fill="#1690c0"/>
<path d="M5,7.5 L12,7.5 L12,4.5 L18,10.5 L12,16.5 L12,13.5 L5,13.5 Z" fill="#1ea4d2"/>
<path d="M12,7.5 L12,4.5 L18,10.5 L12,16.5 L12,13.5 Q14,10.5 12,7.5Z" fill="#e6f7ff"/>
</svg>
<svg class="ab" style="left:1036px;top:1043px" width="26" height="26" viewBox="0 0 26 26">
<circle cx="13" cy="13" r="12" fill="#eceef2"/>
<path d="M13,4 Q20,5 19,13 Q18,21 13,22 Q8,21 7.5,15 Q7.5,9 13,4Z" fill="#d83a20"/>
<path d="M13,14 Q16,16 15,19.5 Q13,21.5 11,19.5 Q10,17 13,14Z" fill="#f8b030"/>
<path d="M11.5,5.5 Q15,3 18.5,5.5 L19.5,7 L17,7.5 Q15,10 12,8.5Z" fill="#141414"/></svg>
<svg class="ab" style="left:1083px;top:1043px" width="21" height="26" viewBox="0 0 21 26">
<rect x="1" y="2" width="18" height="22" fill="#54b9ec"/>
<rect x="1" y="20.5" width="18" height="3" fill="#f1efe8"/><rect x="1" y="23.5" width="18" height="1.2" fill="#8a5a30"/>
<path d="M4,9 L16,9 M4,13 L16,13 M4,17 L16,17" stroke="#1560a0" stroke-width="1.8"/>
<path d="M3,2 L3,3.5 M7,2 L7,3.5 M11,2 L11,3.5 M15,2 L15,3.5" stroke="#1a1a1a" stroke-width="1.3"/></svg>
<div class="ab" style="left:1090px;top:1072px;width:6px;height:3px;border-radius:2px;background:#9d9d9d"></div>
<div class="ab" style="left:1117px;top:1036px;width:38px;height:40px;border-radius:5px;background:#2d2d2d;border:1px solid #353535"></div>
<svg class="ab" style="left:1124px;top:1043px" width="26" height="26" viewBox="0 0 26 26">
<path d="M12,3 Q5,2 4,6 Q4,10 9,12 Q15,14 13,19 Q11,23 5,22" fill="none" stroke="#b9b9a8" stroke-width="1.6"/>
<path d="M13,4 Q8,3.5 7,6.5 Q7,9 11,10.5 Q17,13 15,19 Q13,24 6,24" fill="none" stroke="#8aa070" stroke-width="1.3"/>
<path d="M16,12 Q19,6 23,4 L21,7 L23,7 L23,21" fill="none" stroke="#9ab878" stroke-width="1.8"/>
<path d="M18,12 L18,22 M20,10 L20,21" stroke="#6c8a50" stroke-width="1.2"/></svg>
<div class="ab" style="left:1129px;top:1072px;width:16px;height:3px;border-radius:2px;background:#4c9ee0"></div>
<svg class="ab" style="left:1168px;top:1043px" width="26" height="26" viewBox="0 0 26 26">
<path d="M2,5 L22,2 L22,8 L2,8Z" fill="#a57ae6"/>
<rect x="1" y="6" width="24" height="18" rx="1" fill="#6e58e0"/><rect x="1" y="8" width="24" height="12" fill="#b49cff"/></svg>
<div class="ab" style="left:1177px;top:1072px;width:6px;height:3px;border-radius:2px;background:#9d9d9d"></div>
<svg class="ab" style="left:1211px;top:1045px" width="28" height="22" viewBox="0 0 28 22">
<rect x="1" y="1" width="26" height="20" rx="2" fill="#12305e"/><rect x="2.5" y="3" width="23" height="15.5" fill="#8fdcf8"/><path d="M6,18 Q14,8 25,6" stroke="#e8f8ff" stroke-width="1.5" fill="none"/></svg>
<div class="ab" style="left:1221px;top:1072px;width:6px;height:3px;border-radius:2px;background:#9d9d9d"></div>
<svg class="ab" style="left:1706px;top:1048px" width="18" height="16" viewBox="0 0 18 16">
<path d="M7,1.5 L8.5,5.5 L12.5,5.8 L9.4,8.3 L10.4,12.3 L7,10 L3.6,12.3 L4.6,8.3 L1.5,5.8 L5.5,5.5Z" fill="#e8dca0"/>
<rect x="6" y="8" width="11" height="6.5" fill="#7cb9e8"/></svg>
<svg class="ab" style="left:1730px;top:1047px" width="20" height="19" viewBox="0 0 20 19">
<path d="M2,3 Q6,3 9,1 Q12,3 16,3 L16,9 Q16,14 9,17 Q2,14 2,9Z" fill="#2f8ee0"/>
<path d="M9,1 Q12,3 16,3 L16,9 L9,9Z" fill="#1d6ac0"/>
<circle cx="12.5" cy="13" r="4.8" fill="#1a8a3a"/><path d="M10.2,13 L12,14.8 L15,11.5" fill="none" stroke="#c8ffd0" stroke-width="1.3"/></svg>
<svg class="ab" style="left:1756px;top:1047px" width="18" height="19" viewBox="0 0 18 19">
<rect x="3.5" y="1" width="6" height="5" fill="none" stroke="#fff" stroke-width="1.2"/>
<path d="M5.5,3 L5.5,4 M7.5,3 L7.5,4" stroke="#fff" stroke-width="1"/>
<path d="M8,17 L2.5,17 L2.5,6 L10.5,6 L10.5,13" fill="none" stroke="#fff" stroke-width="1.2"/>
<path d="M11,16.5 L13,18 L17,13.5" fill="none" stroke="#c0c0c0" stroke-width="1"/></svg>
<svg class="ab" style="left:1782px;top:1047px" width="18" height="18" viewBox="0 0 18 18">
<path d="M12,3 L1.5,3 L1.5,13 L12,13" fill="none" stroke="#fff" stroke-width="1.2"/>
<path d="M4,16.5 L11,16.5 M6,13 L6,16.5 M9,13 L9,16.5" stroke="#fff" stroke-width="1.1"/>
<rect x="12.5" y="1" width="4" height="6" fill="none" stroke="#fff" stroke-width="1.1"/>
<path d="M14.5,7 L14.5,17" stroke="#fff" stroke-width="1.2"/></svg>
<svg class="ab" style="left:1806px;top:1049px" width="18" height="15" viewBox="0 0 18 15">
<path d="M1,5 L4,5 L8,1.5 L8,13.5 L4,10 L1,10Z" fill="none" stroke="#fff" stroke-width="1.1"/>
<path d="M10,5.5 Q11.5,7.5 10,9.5" fill="none" stroke="#fff" stroke-width="1.1"/>
<path d="M12.5,3 Q15.5,7.5 12.5,12" fill="none" stroke="#8a8a8a" stroke-width="1"/>
<path d="M14.5,1 Q18.5,7.5 14.5,14" fill="none" stroke="#666" stroke-width="1"/></svg>
<div class="ab" style="left:1800px;width:100px;top:1041px;text-align:right;font-size:11px;line-height:13px;color:#fff;letter-spacing:.25px">09:56</div>
<div class="ab" style="left:1790px;width:111px;top:1058px;text-align:right;font-size:11px;line-height:13px;color:#fff;letter-spacing:.65px">24/08/2022</div>
<svg class="ab" style="left:669px;top:449px" width="18" height="24" viewBox="0 0 18 24"><path d="M2.5,2.2 L2.5,18.3 L6.3,14.8 L9,20.2 Q10,21 11.6,20 L9.4,14.2 L13.8,13.8 Z" fill="#fff" stroke="#081428" stroke-width="1.15" stroke-linejoin="round"/></svg>
<div class="red" style="left:0px;top:60px;width:172px;height:15px"></div>
<div class="red" style="left:0px;top:157px;width:172px;height:16px"></div>
<div class="red" style="left:0px;top:75px;width:15px;height:82px"></div>
<div class="red" style="left:157px;top:75px;width:15px;height:82px"></div>
<div class="red" style="left:1154px;top:923px;width:382px;height:15px"></div>
<div class="red" style="left:1154px;top:1049px;width:382px;height:15px"></div>
<div class="red" style="left:1154px;top:938px;width:15px;height:111px"></div>
<div class="red" style="left:1521px;top:938px;width:15px;height:111px"></div>
</div></body></html>
